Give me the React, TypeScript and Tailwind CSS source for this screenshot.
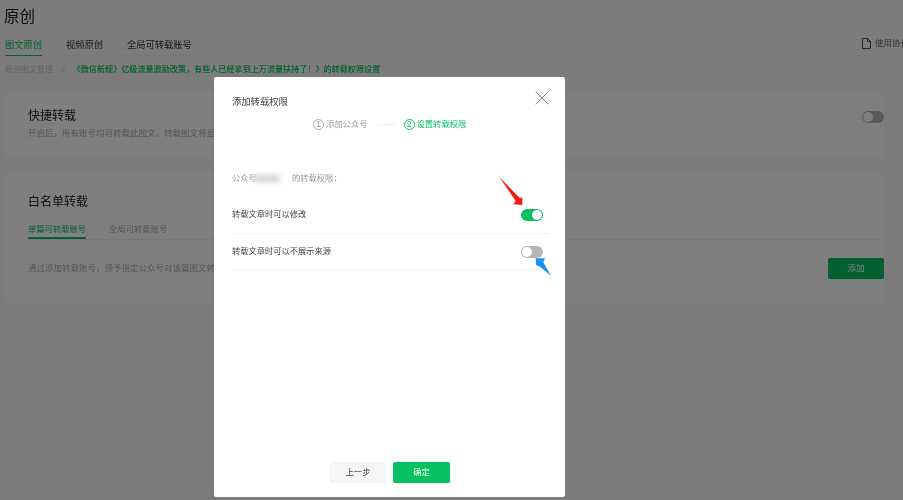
import React from "react";
import { X } from "lucide-react";

function Toggle({ on }: { on: boolean }) {
  return (
    <div
      className={
        "flex h-[12px] w-[22px] items-center rounded-full px-[1px] " +
        (on ? "justify-end bg-[#07c160]" : "justify-start bg-[#b5b5b5]")
      }
    >
      <div className="h-[10px] w-[10px] rounded-full bg-white" />
    </div>
  );
}

function Step({ n, label, active }: { n: number; label: string; active?: boolean }) {
  return (
    <div className={"flex items-center gap-[2px] text-[8.3px] " + (active ? "text-[#07c160]" : "text-[#9a9a9a]")}>
      <span
        className={
          "flex h-[11px] w-[11px] items-center justify-center rounded-full border text-[8.5px] leading-none " +
          (active ? "border-[#07c160]" : "border-[#aaaaaa]")
        }
      >
        {n}
      </span>
      <span>{label}</span>
    </div>
  );
}

export default function App() {
  return (
    <div
      className="relative h-[500px] w-[903px] overflow-hidden bg-[#f8f8f8]"
      style={{ fontFamily: '"Liberation Sans", "Noto Sans CJK SC", sans-serif' }}
    >
      {/* Page behind the dialog */}
      <div className="flex h-full flex-col pl-[5px] pr-[19px] blur-[0.4px]">
        <h1 className="-ml-px pt-[4px] text-[15.5px] leading-[26px] text-[#222]">原创</h1>

        {/* Tabs */}
        <div className="-ml-[5px] -mr-[19px] mt-[7px] flex h-[19px] items-start border-b border-[#f0f0f0] pl-[5px] text-[9.25px] leading-[16px] text-[#333]">
          <div className="mr-[24px]">
            <span className="text-[#07c160]">图文原创</span>
            <div className="mt-[2px] h-[1px] w-[37px] bg-[#07c160]" />
          </div>
          <div className="mr-[24px]">视频原创</div>
          <div>全局可转载账号</div>
          <div className="ml-auto flex h-[12px] items-center gap-[4px] text-[8.5px] whitespace-nowrap text-[#666]">
            <svg width="9" height="11" viewBox="0 0 9 11" fill="none" stroke="#555" strokeWidth="1">
              <path d="M.5.5h5l3 3v7h-8zM5.5.5v3h3" />
            </svg>
            <span className="w-[28px] overflow-hidden">使用协议</span>
          </div>
        </div>

        {/* Breadcrumb */}
        <div className="mt-[8px] flex h-[12px] items-center text-[8px] whitespace-nowrap">
          <span className="text-[#c4c4c4]">原创图文管理</span>
          <span className="ml-[8px] mr-[7px] text-[#c4c4c4]">&gt;</span>
          <span className="text-[8.1px] font-medium text-[#07c160]">《微信新规》亿级流量激励改策，有些人已经拿到上万流量扶持了！》的转载权限设置</span>
        </div>

        {/* Quick repost */}
        <section className="mt-[17px] flex h-[65px] items-start justify-between bg-white pl-[23px] pt-[14px]">
          <div>
            <h2 className="text-[12px] leading-[18px] text-[#222]">快捷转载</h2>
            <p className="mt-[1px] text-[8.5px] leading-[14px] text-[#aaa]">开启后，所有账号均可转载此图文，转载图文将显示原创来源</p>
          </div>
          <div className="mt-[4px]">
            <Toggle on={false} />
          </div>
        </section>

        {/* Whitelist */}
        <section className="mt-[14px] h-[131px] bg-white pl-[23px] pt-[21px]">
          <h2 className="text-[12px] leading-[18px] text-[#222]">白名单转载</h2>
          <div className="mt-[11px] flex border-b border-[#f0f0f0] text-[8.3px] leading-[14px]">
            <div className="mr-[23px]">
              <span className="text-[#07c160]">单篇可转载账号</span>
              <div className="mt-[1px] h-[2px] w-[58px] bg-[#07c160]" />
            </div>
            <span className="text-[#aaa]">全局可转载账号</span>
          </div>
          <div className="mt-[18px] flex items-center justify-between">
            <p className="text-[8.5px] text-[#aaa]">通过添加转载账号，授予指定公众号对该篇图文转载的权限</p>
            <button className="h-[21px] w-[56px] rounded-[2px] bg-[#07c160] text-[8.5px] text-white">添加</button>
          </div>
        </section>
      </div>

      {/* Overlay */}
      <div className="absolute inset-0 bg-black/50" />

      {/* Dialog */}
      <div className="absolute left-[214px] top-[77px] h-[420px] w-[351px] rounded-[2px] bg-white">
        <div className="flex h-full flex-col pl-[18px] pr-[16px] blur-[0.3px]">
          <div className="flex items-start justify-between pt-[18px]">
            <h3 className="text-[9.3px] leading-[15px] text-[#444]">添加转载权限</h3>
            <X size={24} strokeWidth={1} className="-mb-[9px] -mr-[4.5px] -mt-[9.5px] text-[#888]" />
          </div>
          <div className="ml-[81px] mt-[8px] flex items-center">
            <Step n={1} label="添加公众号" />
            <div className="ml-[9px] mr-[8px] h-px w-[19px] bg-[#eeeeee]" />
            <Step n={2} label="设置转载权限" active />
          </div>

          <div className="mt-[41px] flex items-center text-[8.3px] leading-[14px] text-[#999]">
            <span>公众号</span>
            <span className="-ml-[3px] mr-[12px] h-[9px] w-[26px] bg-[#dcdcdc] blur-[2px]" />
            <span>的转载权限：</span>
          </div>

          <div className="mt-[12px] flex h-[37px] items-center justify-between border-b border-[#f0f0f0] pr-[6px] text-[8.25px] text-[#444]">
            <span>转载文章时可以修改</span>
            <Toggle on />
          </div>
          <div className="flex h-[36px] items-center justify-between border-b border-[#f0f0f0] pr-[6px] text-[8.25px] text-[#444]">
            <span>转载文章时可以不展示来源</span>
            <Toggle on={false} />
          </div>

          <div className="mb-[14px] ml-[98px] mt-auto flex gap-[7px] text-[8.3px]">
            <button className="h-[21px] w-[56px] rounded-[2px] bg-[#f4f5f6] text-[#444]">上一步</button>
            <button className="h-[21px] w-[57px] rounded-[2px] bg-[#07c160] text-white">确定</button>
          </div>
        </div>
      </div>

      {/* Annotation arrows */}
      <svg className="pointer-events-none absolute left-0 top-0" width="903" height="500">
        <path d="M499.3 177L520 198.3L522.3 197.3L522.3 205L513.3 204.3L515.7 201Z" fill="#f5190f" />
        <path d="M535.7 258.3L545 258.3L543.3 262.3L551 275.7L540 266.7L536 265Z" fill="#1c92ee" />
      </svg>
    </div>
  );
}
